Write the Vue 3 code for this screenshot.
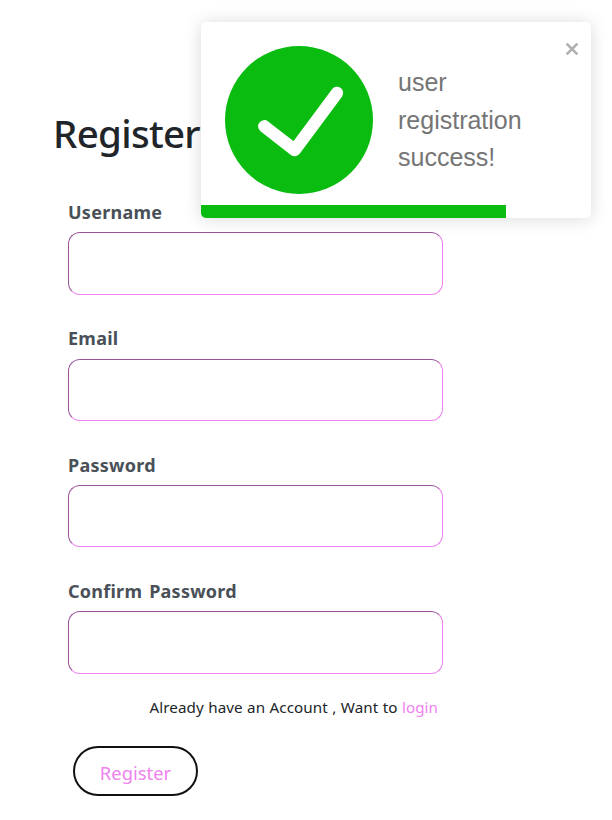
<script setup>
import { ref } from 'vue'

const fields = [
  { id: 'username', label: 'Username', type: 'text' },
  { id: 'email', label: 'Email', type: 'email' },
  { id: 'password', label: 'Password', type: 'password' },
  { id: 'confirm', label: 'Confirm Password', type: 'password' },
]
const toastOpen = ref(true)
const progress = ref(78.2)
</script>

<template>
  <main class="page">
    <h1 class="title">Register</h1>
    <form class="form" @submit.prevent>
      <div v-for="f in fields" :key="f.id" class="field">
        <label :for="f.id" class="label">{{ f.label }}</label>
        <input :id="f.id" :type="f.type" class="input" />
      </div>
      <p class="hint">Already have an Account , Want to <a class="link">login</a></p>
      <button class="submit" type="submit">Register</button>
    </form>

    <aside v-if="toastOpen" class="toast">
      <div class="toast-body">
        <svg class="check" viewBox="0 0 148 148">
          <circle cx="74" cy="74" r="74" fill="#09bc0f" />
          <path d="M39.3 80.3 L69.7 104 L112 47" fill="none" stroke="#fff" stroke-width="12.4" stroke-linecap="round" stroke-linejoin="round" />
        </svg>
        <div class="message">user registration success!</div>
        <button class="close" type="button" aria-label="close" @click="toastOpen = false">
          <svg viewBox="0 0 14 14" width="14" height="14">
            <path d="M1.6 1.6 L12.4 12.4 M12.4 1.6 L1.6 12.4" stroke="#b0b0b0" stroke-width="2.7" />
          </svg>
        </button>
      </div>
      <div class="bar" :style="{ width: progress + '%' }"></div>
    </aside>
  </main>
</template>

<style>
body {
  background: #fff;
}
</style>

<style scoped>
.page {
  position: relative;
  box-sizing: border-box;
  height: 820px;
  padding: 109px 0 0 53px;
  overflow: hidden;
  font-family: "Noto Sans", "Open Sans", sans-serif;
  color: #212529;
}
.title {
  margin: 0;
  height: 48px;
  font-size: 38.5px;
  line-height: 48px;
  font-weight: 500;
  letter-spacing: -0.7px;
}
.form {
  width: 375px;
  margin: 42px 0 0 15px;
}
.field {
  height: 126.4px;
}
.label {
  display: block;
  box-sizing: border-box;
  height: 33.2px;
  padding-top: 1px;
  line-height: 25px;
  font-size: 18px;
  font-weight: 700;
  letter-spacing: 0.25px;
  word-spacing: 2px;
  color: #495057;
}
.input {
  display: block;
  box-sizing: border-box;
  width: 375px;
  height: 62.4px;
  padding: 6px 12px;
  border: 1px inset violet;
  border-radius: 12px;
  background: #fff;
  outline: none;
}
.hint {
  margin: -10px 0 0;
  padding-right: 5px;
  line-height: 24px;
  font-size: 15.2px;
  font-weight: 400;
  letter-spacing: 0.05px;
  word-spacing: 0.5px;
  text-align: right;
  white-space: nowrap;
}
.link {
  color: violet;
}
.submit {
  display: block;
  box-sizing: border-box;
  width: 125px;
  height: 50px;
  margin: 27.4px 0 0 5px;
  padding: 4px 0 0;
  border: 2px solid #111;
  border-radius: 25px;
  background: #fff;
  color: violet;
  font-family: inherit;
  font-size: 18.4px;
  font-weight: 400;
}
.toast {
  position: absolute;
  left: 201px;
  top: 22px;
  width: 390px;
  height: 196px;
  display: flex;
  flex-direction: column;
  justify-content: space-between;
  overflow: hidden;
  border-radius: 5px;
  background: #fff;
  box-shadow: 0 1px 18px rgba(0, 0, 0, 0.15);
}
.toast-body {
  display: flex;
  align-items: flex-start;
  padding: 24px 12px 0 24px;
}
.check {
  flex: none;
  width: 148px;
  height: 148px;
}
.message {
  width: 150px;
  margin: 18px 0 0 25px;
  font-family: "Liberation Sans", Arial, sans-serif;
  font-size: 25px;
  line-height: 37.5px;
  color: #757575;
}
.close {
  display: flex;
  margin: -4px 0 0 auto;
  padding: 0;
  border: 0;
  background: none;
}
.bar {
  flex: none;
  height: 13px;
  background: #09bc0f;
}
</style>
